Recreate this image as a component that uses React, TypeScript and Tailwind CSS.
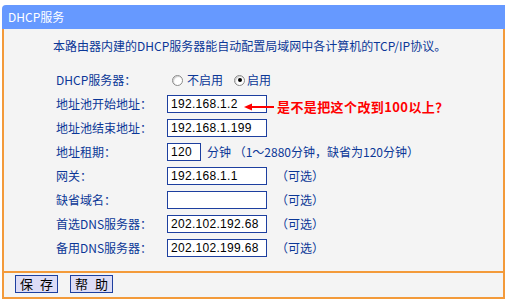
import type { ReactNode } from "react";

const font = "font-['Noto_Sans_CJK_SC',sans-serif]";
const numFont = "font-['Liberation_Sans','Noto_Sans_CJK_SC',sans-serif]";

function Radio({ checked }: { checked?: boolean }) {
  return (
    <span className="flex h-[11px] w-[11px] items-center justify-center rounded-full border border-[#8a8a8a] bg-white shadow-[inset_1px_1px_1px_rgba(0,0,0,0.2)]">
      {checked && <span className="h-[4px] w-[4px] rounded-full bg-black" />}
    </span>
  );
}

function Field({ value, width = "w-[100px]" }: { value?: string; width?: string }) {
  return (
    <div
      className={`flex h-[18px] items-center border border-[#1d3f9f] bg-white px-[3px] text-[12px] tracking-[0.3px] text-black ${numFont} ${width}`}
    >
      {value}
    </div>
  );
}

function Row({ label, children }: { label: string; children: ReactNode }) {
  return (
    <div className="flex h-[24px] items-center">
      <div className="w-[111px] leading-[14px]">{label}</div>
      <div className="flex items-center">{children}</div>
    </div>
  );
}

function Optional() {
  return <span className="ml-[9px]">（可选）</span>;
}

function Button({ children }: { children: ReactNode }) {
  return (
    <button
      type="button"
      className="flex h-[18px] w-[43px] items-center justify-center border border-[#1d3f9f] bg-[#dcdcf6] pl-[2px] text-[13px] leading-[16px] tracking-[2px] text-black"
    >
      {children}
    </button>
  );
}

export default function App() {
  return (
    <div className={`h-[301px] w-[505px] bg-white pl-[2px] pt-[5px] text-[12px] text-[#0b3797] ${font}`}>
      <div className="flex h-[24px] items-center rounded-tl-[4px] bg-[#6699ff] pl-[6px] text-white">
        DHCP服务
      </div>

      <div className="border-x-2 border-b-2 border-[#f39a3a] bg-[#f4f4f4]">
        <div className="pb-[11px] pl-[49px] pt-[8px]">
          <div className="h-[18px] leading-[18px]">
            本路由器内建的DHCP服务器能自动配置局域网中各计算机的TCP/IP协议。
          </div>

          <div className="mt-[13px] pl-[3px]">
            <Row label="DHCP服务器：">
              <span className="ml-[5px]">
                <Radio />
              </span>
              <span className="ml-[4px]">不启用</span>
              <span className="ml-[11px]">
                <Radio checked />
              </span>
              <span className="ml-[2px]">启用</span>
            </Row>

            <Row label="地址池开始地址：">
              <div className="relative">
                <Field value="192.168.1.2" />
                <div className="absolute left-[77px] top-[2px] flex items-center">
                  <svg width="30" height="10" viewBox="0 0 30 10" className="shrink-0">
                    <path d="M0 5 L8 1.5 L8 8.5 Z" fill="#ff0000" />
                    <rect x="6" y="4" width="24" height="2" fill="#ff0000" />
                  </svg>
                  <span className="ml-[3px] whitespace-nowrap text-[13px] font-bold tracking-[0.4px] text-[#ff0000]">
                    是不是把这个改到100以上？
                  </span>
                </div>
              </div>
            </Row>

            <Row label="地址池结束地址：">
              <Field value="192.168.1.199" />
            </Row>

            <Row label="地址租期：">
              <Field value="120" width="w-[34px]" />
              <span className="ml-[6px]">分钟 （1～2880分钟，缺省为120分钟）</span>
            </Row>

            <Row label="网关：">
              <Field value="192.168.1.1" />
              <Optional />
            </Row>

            <Row label="缺省域名：">
              <Field />
              <Optional />
            </Row>

            <Row label="首选DNS服务器：">
              <Field value="202.102.192.68" />
              <Optional />
            </Row>

            <Row label="备用DNS服务器：">
              <Field value="202.102.199.68" />
              <Optional />
            </Row>
          </div>
        </div>

        <div className="flex h-[26px] gap-[12px] border-t-2 border-[#f39a3a] pl-[11px] pt-[2px]">
          <Button>保 存</Button>
          <Button>帮 助</Button>
        </div>
      </div>
    </div>
  );
}
